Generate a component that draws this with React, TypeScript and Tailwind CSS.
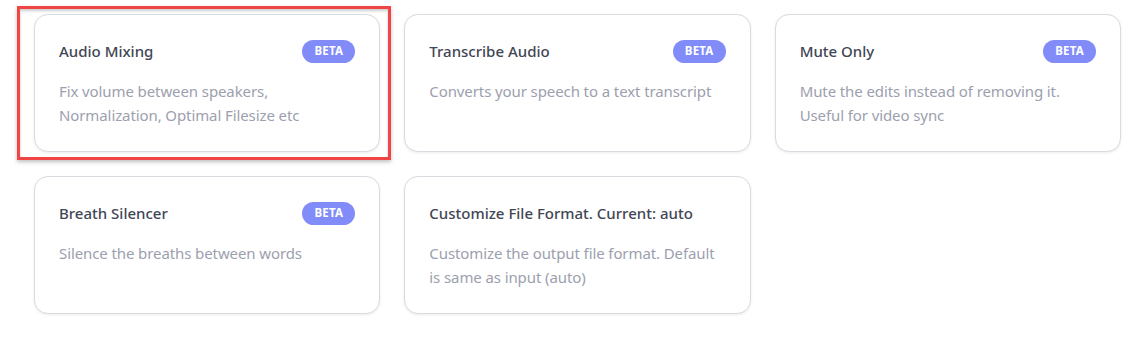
import React from "react";

const cards = [
  { title: "Audio Mixing", desc: "Fix volume between speakers, Normalization, Optimal Filesize etc", beta: true },
  { title: "Transcribe Audio", desc: "Converts your speech to a text transcript", beta: true },
  { title: "Mute Only", desc: "Mute the edits instead of removing it. Useful for video sync", beta: true },
  { title: "Breath Silencer", desc: "Silence the breaths between words", beta: true },
  { title: "Customize File Format. Current: auto", desc: "Customize the output file format. Default is same as input (auto)", beta: false },
];

function Card({ title, desc, beta }: { title: string; desc: string; beta: boolean }) {
  return (
    <div className="h-[138px] rounded-[14px] border border-[#d8dbe0] bg-white pl-[24px] pr-[24px] pt-[24px] shadow-[0_1px_3px_rgba(0,0,0,0.08)]">
      <div className="flex h-[24px] items-center justify-between">
        <span className="text-[15px] font-medium text-[#3f4654]">{title}</span>
        {beta && (
          <span className="flex h-[23px] w-[53px] items-center justify-center rounded-full bg-[#818cf8] text-[11.5px] font-bold tracking-[0.2px] text-white">
            BETA
          </span>
        )}
      </div>
      <p className="mt-[16px] -mr-[2px] text-[15px] leading-[24px] tracking-[-0.1px] text-[#9ca0ae]">{desc}</p>
    </div>
  );
}

export default function App() {
  return (
    <div
      className="relative h-[348px] w-[1146px] bg-white"
      style={{ fontFamily: '"Noto Sans", "Open Sans", sans-serif' }}
    >
      <div className="grid w-[1121px] grid-cols-3 gap-x-6 gap-y-6 pl-[34px] pt-[14px]">
        {cards.map((c) => (
          <Card key={c.title} {...c} />
        ))}
      </div>
      <div className="pointer-events-none absolute left-[17px] top-[6px] h-[154px] w-[374px] border-[3px] border-[#f04545] shadow-[0_2px_4px_rgba(0,0,0,0.25),inset_0_2px_3px_rgba(0,0,0,0.2)]" />
    </div>
  );
}
